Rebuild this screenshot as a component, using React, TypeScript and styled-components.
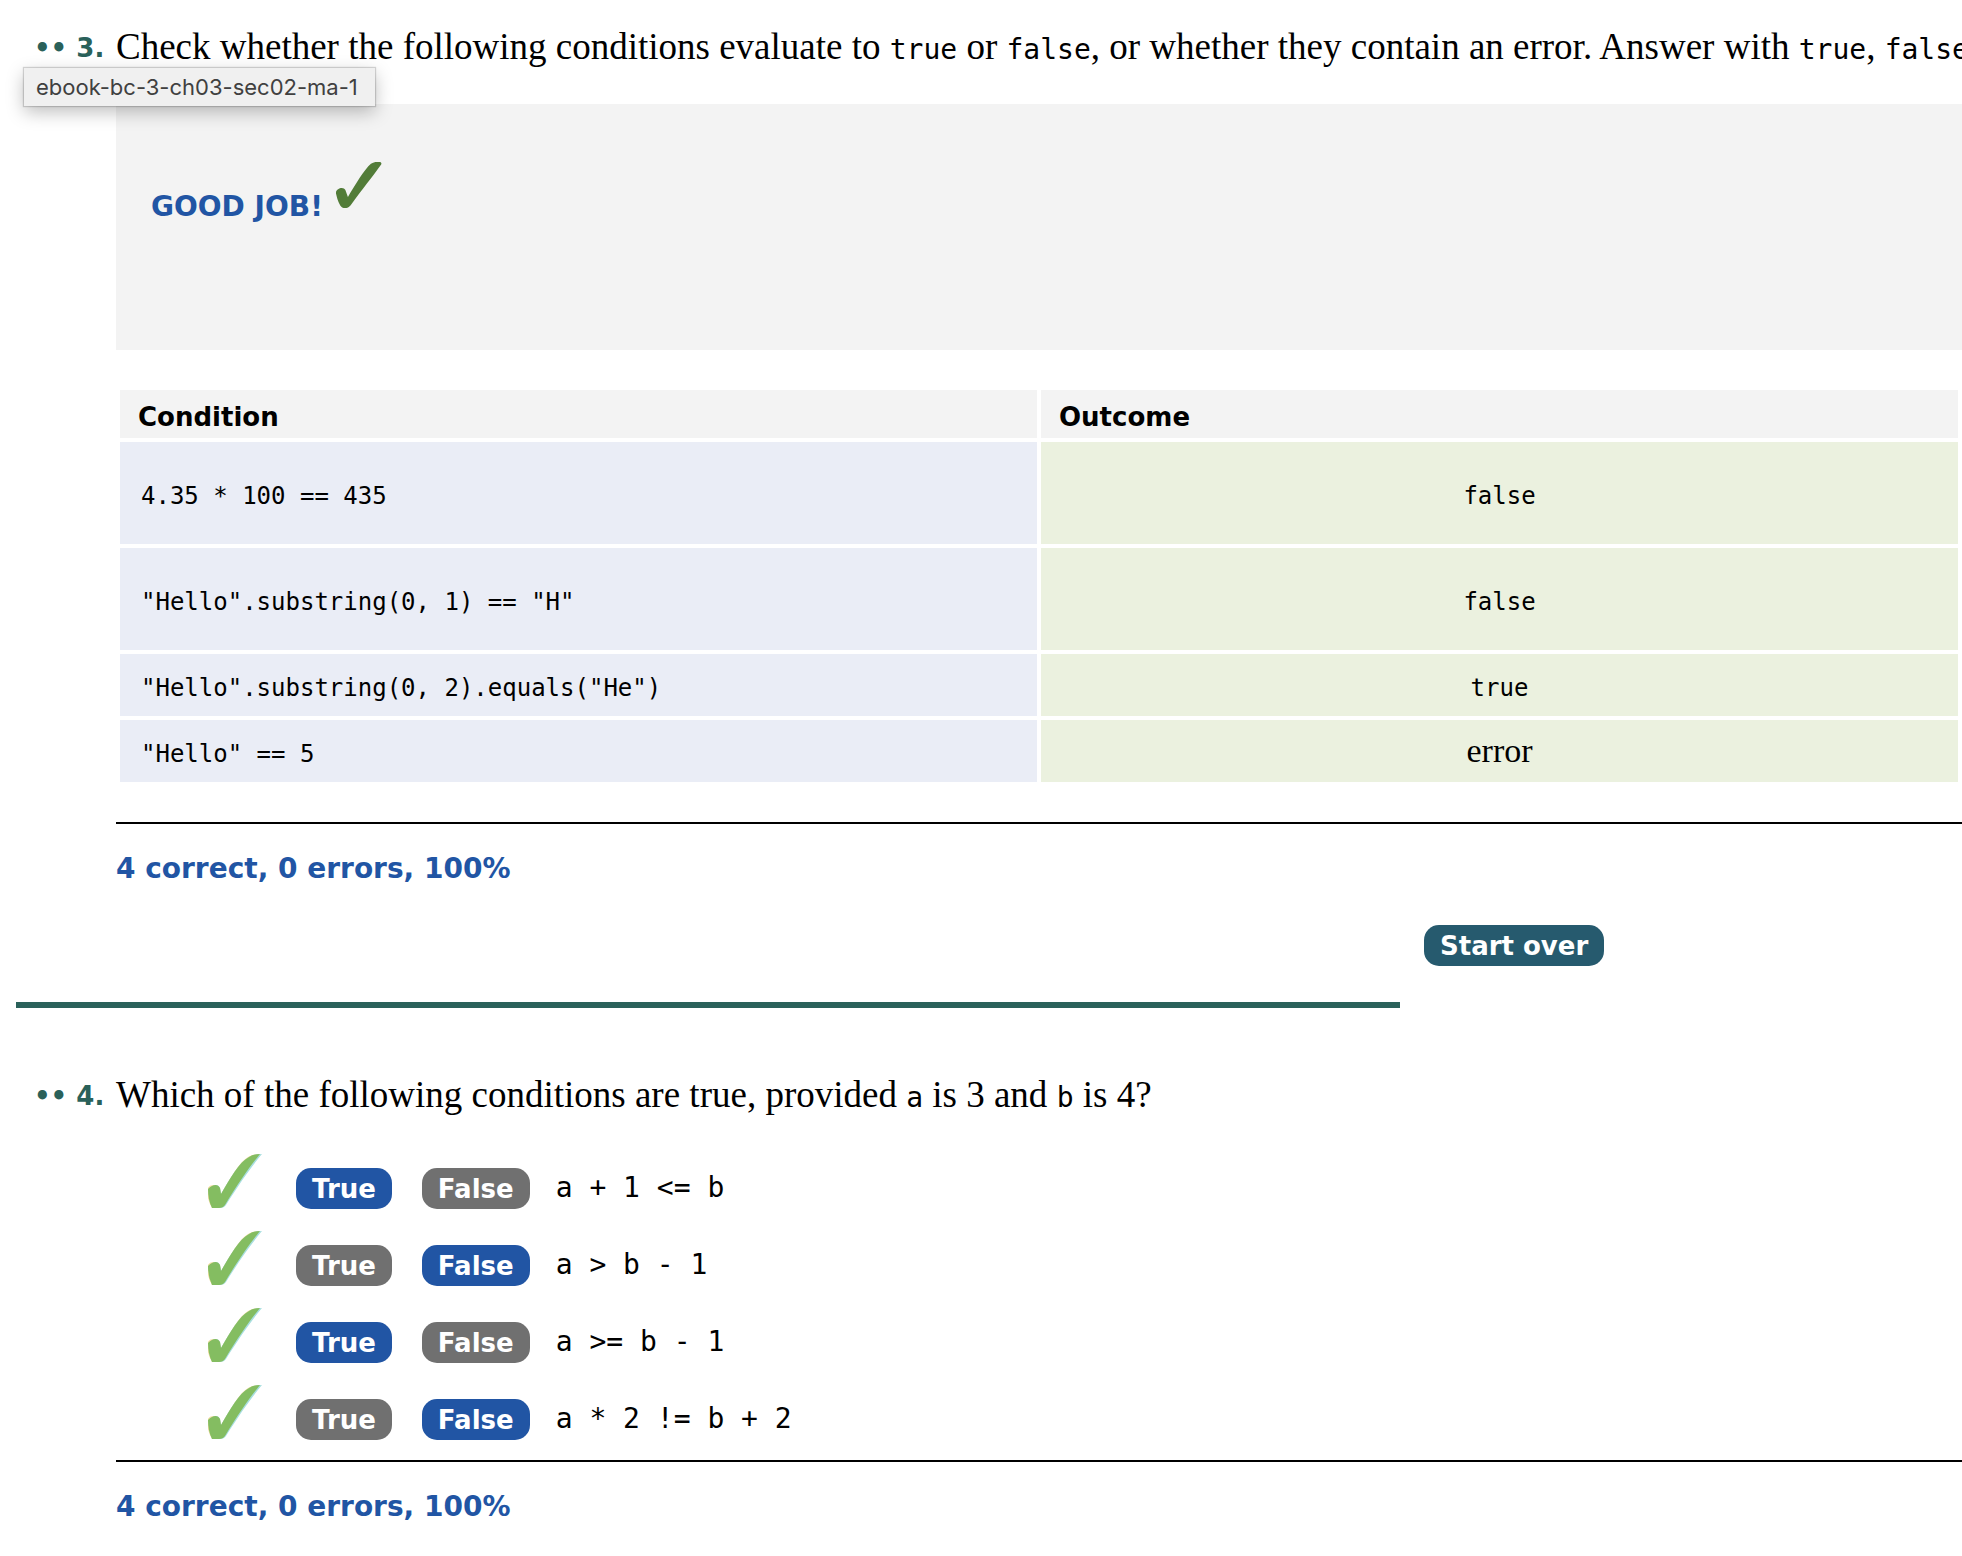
import React, { useState } from "react";
import styled, { createGlobalStyle } from "styled-components";

const SANS = '"DejaVu Sans", Verdana, sans-serif';
const SERIF = '"Liberation Serif", "Times New Roman", serif';
const MONO = '"DejaVu Sans Mono", monospace';

const GlobalStyle = createGlobalStyle`
  *, *::before, *::after { box-sizing: border-box; }
  body { margin: 0; background: #fff; color: #000; overflow-x: hidden; }
`;

const Page = styled.main`
  padding: 24px 0 32px;
  overflow: hidden;
`;

const Exercise = styled.section`
  display: grid;
  grid-template-columns: 116px minmax(0, 1fr);
  position: relative;
`;

const Marker = styled.span`
  padding-left: 34px;
  font: bold 26px/48px ${SANS};
  color: #2a615a;
  white-space: nowrap;
`;

const Question = styled.h2`
  margin: 0;
  font: 37px/46px ${SERIF};
  white-space: nowrap;
`;

const Code = styled.code<{ $small?: boolean }>`
  font-family: ${MONO};
  font-size: ${(p) => (p.$small ? 24 : 28)}px;
  line-height: 1;
`;

const Body = styled.div`
  grid-column: 2;
`;

const Tooltip = styled.div`
  position: absolute;
  left: 24px;
  top: 44px;
  padding: 0 17px 0 12px;
  font: 22px/38px Inter, sans-serif;
  color: #404040;
  background: #f0f0f0;
  box-shadow: 0 0 1px 1px rgba(0, 0, 0, 0.16), 0 6px 18px rgba(0, 0, 0, 0.26);
`;

const Feedback = styled.div`
  display: flex;
  align-items: flex-start;
  gap: 13px;
  min-height: 246px;
  margin: 32px 0 36px;
  padding: 58px 35px;
  background: #f3f3f3;
`;

const Praise = styled.strong`
  padding-top: 27px;
  font: bold 28px/36px ${SANS};
  color: #2155a4;
`;

const Grid = styled.table`
  width: 100%;
  margin-bottom: 36px;
  table-layout: fixed;
  border-collapse: separate;
  border-spacing: 4px;
`;

const Head = styled.th`
  height: 48px;
  padding: 6px 18px 0;
  font: bold 26px/40px ${SANS};
  text-align: left;
  background: #f3f3f3;
`;

const Cell = styled.td<{ $tall: boolean; $outcome?: boolean }>`
  height: ${(p) => (p.$tall ? 102 : 62)}px;
  padding: 0 21px;
  font: 34px/40px ${SERIF};
  text-align: ${(p) => (p.$outcome ? "center" : "left")};
  background: ${(p) => (p.$outcome ? "#ebf1df" : "#eaedf6")};
`;

const Score = styled.p`
  margin: 0;
  padding-top: 27px;
  border-top: 2px solid #000;
  font: bold 28px/36px ${SANS};
  color: #2155a4;
`;

const Footer = styled.div`
  display: flex;
  align-items: flex-end;
  gap: 24px;
  margin: 38px 0 64px;
  padding-left: 16px;
`;

const Divider = styled.hr`
  flex: 1;
  height: 6px;
  margin: 0;
  border: 0;
  background: #2a615a;
`;

const Actions = styled.div`
  flex: 0 0 538px;
  padding-bottom: 42px;
`;

const Button = styled.button<{ $color: string }>`
  height: 41px;
  padding: 0 16px;
  border: 0;
  border-radius: 15px;
  font: bold 26px/40px ${SANS};
  color: #fff;
  background: ${(p) => p.$color};
  cursor: pointer;
`;

const Choices = styled.ul`
  display: flex;
  flex-direction: column;
  gap: 2px;
  margin: 0;
  padding: 34px 0 0 92px;
  list-style: none;
`;

const Choice = styled.li`
  display: flex;
  align-items: flex-start;
  height: 75px;
`;

const Options = styled.div`
  display: flex;
  gap: 30px;
  margin: 14px 26px 0 34px;
`;

const Expression = styled(Code)`
  padding-top: 15px;
  line-height: 38px;
  white-space: pre;
`;

const Tick = ({ size, soft }: { size: number; soft?: boolean }) => (
  <svg width={size} height={size} viewBox="0 0 54 54" role="img" aria-label="Correct">
    {soft && (
      <>
        <path d="M-1 35C2 30 8 30 12 34L13 40C22 25 31 8 40 3Q44 0 51 0C42 10 31 26 16 51Q14 54 10 54H4Q-1 46-1 35Z" fill="#f3dfa6" />
        <path d="M2 35C6 30 10 30 12 34L13 40C22 25 31 8 42 3Q46 0 54 0C44 12 33 27 18 51Q16 54 12 54H5Q1 46 2 35Z" fill="#a9dfe0" />
      </>
    )}
    {soft ? (
      <path d="M0 35C5 30 10 30 12 34L13 40C22 25 31 8 41 3Q45 0 52 0C43 11 32 26 17 51Q15 54 11 54H4Q0 46 0 35Z" fill="#84bd61" />
    ) : (
      <path d="M0 37C-1 31 9 28 11 33L14 41C23 26 33 9 41 2Q46-1 52 0Q54 1 53 3C43 17 31 32 17 51C14 55 7 55 5 51C2 46 1 41 0 37Z" fill="#527c38" />
    )}
  </svg>
);

const rows = [
  { condition: "4.35 * 100 == 435", outcome: "false", tall: true },
  { condition: '"Hello".substring(0, 1) == "H"', outcome: "false", tall: true },
  { condition: '"Hello".substring(0, 2).equals("He")', outcome: "true", tall: false },
  { condition: '"Hello" == 5', outcome: "error", tall: false },
];

const statements = [
  { text: "a + 1 <= b", answer: true },
  { text: "a > b - 1", answer: false },
  { text: "a >= b - 1", answer: true },
  { text: "a * 2 != b + 2", answer: false },
];

const BLUE = "#2155a4";
const GREY = "#707070";

export default function App() {
  const [answers, setAnswers] = useState(statements.map((s) => s.answer));
  const choose = (index: number, value: boolean) =>
    setAnswers(answers.map((a, i) => (i === index ? value : a)));

  return (
    <Page>
      <GlobalStyle />
      <Exercise>
        <Marker>•• 3.</Marker>
        <Question>
          Check whether the following conditions evaluate to <Code>true</Code> or <Code>false</Code>, or
          whether they contain an error. Answer with <Code>true</Code>, <Code>false</Code>
        </Question>
        <Body>
          <Feedback>
            <Praise>GOOD JOB!</Praise>
            <Tick size={46} />
          </Feedback>
          <Grid>
            <thead>
              <tr>
                <Head scope="col">Condition</Head>
                <Head scope="col">Outcome</Head>
              </tr>
            </thead>
            <tbody>
              {rows.map((row) => (
                <tr key={row.condition}>
                  <Cell $tall={row.tall}>
                    <Code $small>{row.condition}</Code>
                  </Cell>
                  <Cell $tall={row.tall} $outcome>
                    {row.outcome === "error" ? row.outcome : <Code $small>{row.outcome}</Code>}
                  </Cell>
                </tr>
              ))}
            </tbody>
          </Grid>
          <Score>4 correct, 0 errors, 100%</Score>
        </Body>
        <Tooltip role="tooltip">ebook-bc-3-ch03-sec02-ma-1</Tooltip>
      </Exercise>

      <Footer>
        <Divider />
        <Actions>
          <Button type="button" $color="#265a6e">Start over</Button>
        </Actions>
      </Footer>

      <Exercise>
        <Marker>•• 4.</Marker>
        <Question>
          Which of the following conditions are true, provided <Code>a</Code> is 3 and <Code>b</Code> is 4?
        </Question>
        <Body>
          <Choices>
            {statements.map((statement, i) => (
              <Choice key={statement.text}>
                <Tick size={54} soft />
                <Options>
                  <Button type="button" aria-pressed={answers[i]} $color={answers[i] ? BLUE : GREY} onClick={() => choose(i, true)}>
                    True
                  </Button>
                  <Button type="button" aria-pressed={!answers[i]} $color={answers[i] ? GREY : BLUE} onClick={() => choose(i, false)}>
                    False
                  </Button>
                </Options>
                <Expression>{statement.text}</Expression>
              </Choice>
            ))}
          </Choices>
          <Score>4 correct, 0 errors, 100%</Score>
        </Body>
      </Exercise>
    </Page>
  );
}
